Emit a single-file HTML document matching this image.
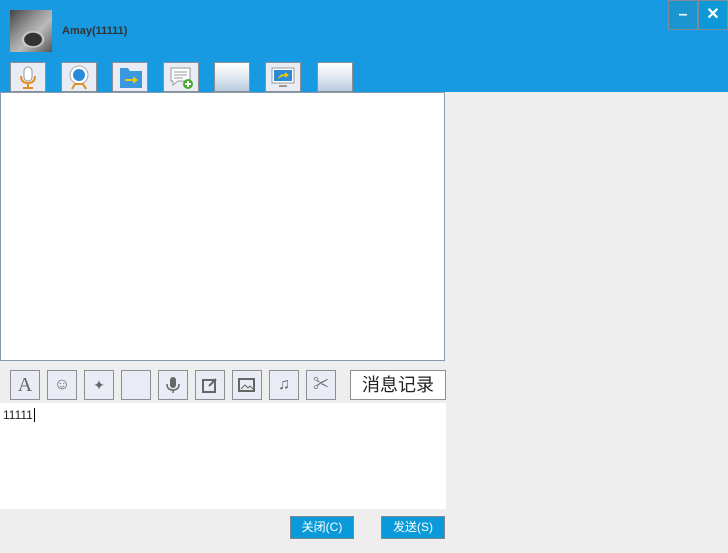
<!DOCTYPE html>
<html><head><meta charset="utf-8"><style>
*{margin:0;padding:0;box-sizing:border-box}
body{width:728px;height:553px;background:#eeeeee;position:relative;overflow:hidden;font-family:"Liberation Sans","Noto Sans CJK SC",sans-serif}
.hdr{position:absolute;left:0;top:0;width:728px;height:92px;background:#189ae2}
.av{position:absolute;left:10px;top:10px;width:42px;height:42px;background:radial-gradient(ellipse 12px 9px at 55% 70%,#333 0 70%,#d8d8d8 80%,transparent 100%),linear-gradient(135deg,#444,#999 40%,#bbb 60%,#555)}
.name{position:absolute;left:62px;top:25px;font-size:11px;font-weight:bold;color:#333}
.tb{position:absolute;top:62px;width:36px;height:30px;background:#e9ecf5;border:1px solid #8a8f96}
.grad{background:linear-gradient(#fff,#e8eef5 40%,#b9cce0)}
.wb{position:absolute;top:0;width:30px;height:30px;border:1px solid #7f8c97;color:#fff;font-size:16px;text-align:center;line-height:28px;font-weight:bold}
.chat{position:absolute;left:0;top:92px;width:445px;height:269px;background:#fff;border:1px solid #8a99a8}
.t2{position:absolute;top:370px;width:30px;height:30px;background:#e9ecf5;border:1px solid #8a8f96;color:#666;text-align:center;line-height:28px;font-size:16px}
.rec{position:absolute;left:350px;top:370px;width:96px;height:30px;background:#fff;border:1px solid #8a8f96;font-size:18px;text-align:center;line-height:28px;color:#222}
.inp{position:absolute;left:0;top:403px;width:446px;height:106px;background:#fff;font-size:12px;padding:5px 3px;color:#222}
.btn{position:absolute;top:516px;width:64px;height:23px;background:#0a9ada;border:1px solid #7c8894;color:#fff;font-size:12px;text-align:center;line-height:21px}
</style></head><body>
<div class="hdr">
<div class="av"></div>
<div class="name">Amay(11111)</div>
<div class="wb" style="left:668px;background:#1a95d0">–</div>
<div class="wb" style="left:698px;background:#0d98d8">✕</div>
<div class="tb" style="left:10px"><svg width="34" height="28"><rect x="13" y="4" width="8" height="14" rx="4" fill="#fff" stroke="#999"/><path d="M10 13q0 7 7 7 7 0 7-7M17 20v4M12 25h10" stroke="#e09020" stroke-width="2" fill="none"/></svg></div>
<div class="tb" style="left:61px"><svg width="34" height="28"><circle cx="17" cy="12" r="9" fill="#fff" stroke="#aaa"/><circle cx="17" cy="12" r="6" fill="#2a8ad8"/><path d="M10 26l3-5h8l3 5" stroke="#e09020" stroke-width="2" fill="none"/></svg></div>
<div class="tb" style="left:112px"><svg width="34" height="28"><path d="M7 5h8l2 3h12v17H7z" fill="#3a98e0"/><path d="M12 16h8v-3l5 4-5 4v-3h-8z" fill="#f2c500"/></svg></div>
<div class="tb" style="left:163px"><svg width="34" height="28"><path d="M7 5h19v13H14l-5 4v-4H7z" fill="#fff" stroke="#999"/><path d="M10 9h13M10 12h13M10 15h9" stroke="#999"/><circle cx="24" cy="21" r="5" fill="#4aa830"/><path d="M21 21h6M24 18v6" stroke="#fff" stroke-width="2"/></svg></div>
<div class="tb grad" style="left:214px"></div>
<div class="tb" style="left:265px"><svg width="34" height="28"><rect x="6" y="5" width="22" height="15" fill="#fff" stroke="#999"/><rect x="8" y="7" width="18" height="11" fill="#2a8ad8"/><path d="M12 16q1-5 7-5v-2l4 3-4 3v-2q-4 0-7 3z" fill="#f2c500"/><path d="M13 23h8" stroke="#999" stroke-width="2"/></svg></div>
<div class="tb grad" style="left:317px"></div>
</div>
<div class="chat"></div>
<div class="t2" style="left:10px;font-family:'Liberation Serif',serif;font-size:20px">A</div>
<div class="t2" style="left:47px">☺</div>
<div class="t2" style="left:84px;font-size:14px">✦</div>
<div class="t2 grad" style="left:121px"></div>
<div class="t2" style="left:158px"><svg width="28" height="28"><rect x="11" y="6" width="6" height="11" rx="3" fill="#666"/><path d="M8 13q0 6 6 6 6 0 6-6M14 19v3" stroke="#666" stroke-width="1.5" fill="none"/></svg></div>
<div class="t2" style="left:195px"><svg width="28" height="28"><rect x="7" y="9" width="12" height="12" fill="none" stroke="#666" stroke-width="2"/><path d="M13 15l7-7" stroke="#666" stroke-width="2"/></svg></div>
<div class="t2" style="left:232px"><svg width="28" height="28"><rect x="6" y="8" width="15" height="12" fill="none" stroke="#666" stroke-width="2"/><path d="M8 18l4-4 3 3 2-2 3 3" stroke="#666" fill="none"/></svg></div>
<div class="t2" style="left:269px">♫</div>
<div class="t2" style="left:306px">✂</div>
<div class="rec">消息记录</div>
<div class="inp">11111<span style="border-left:1px solid #000;margin-left:1px"></span></div>
<div class="btn" style="left:290px">关闭(C)</div>
<div class="btn" style="left:381px">发送(S)</div>
</body></html>
